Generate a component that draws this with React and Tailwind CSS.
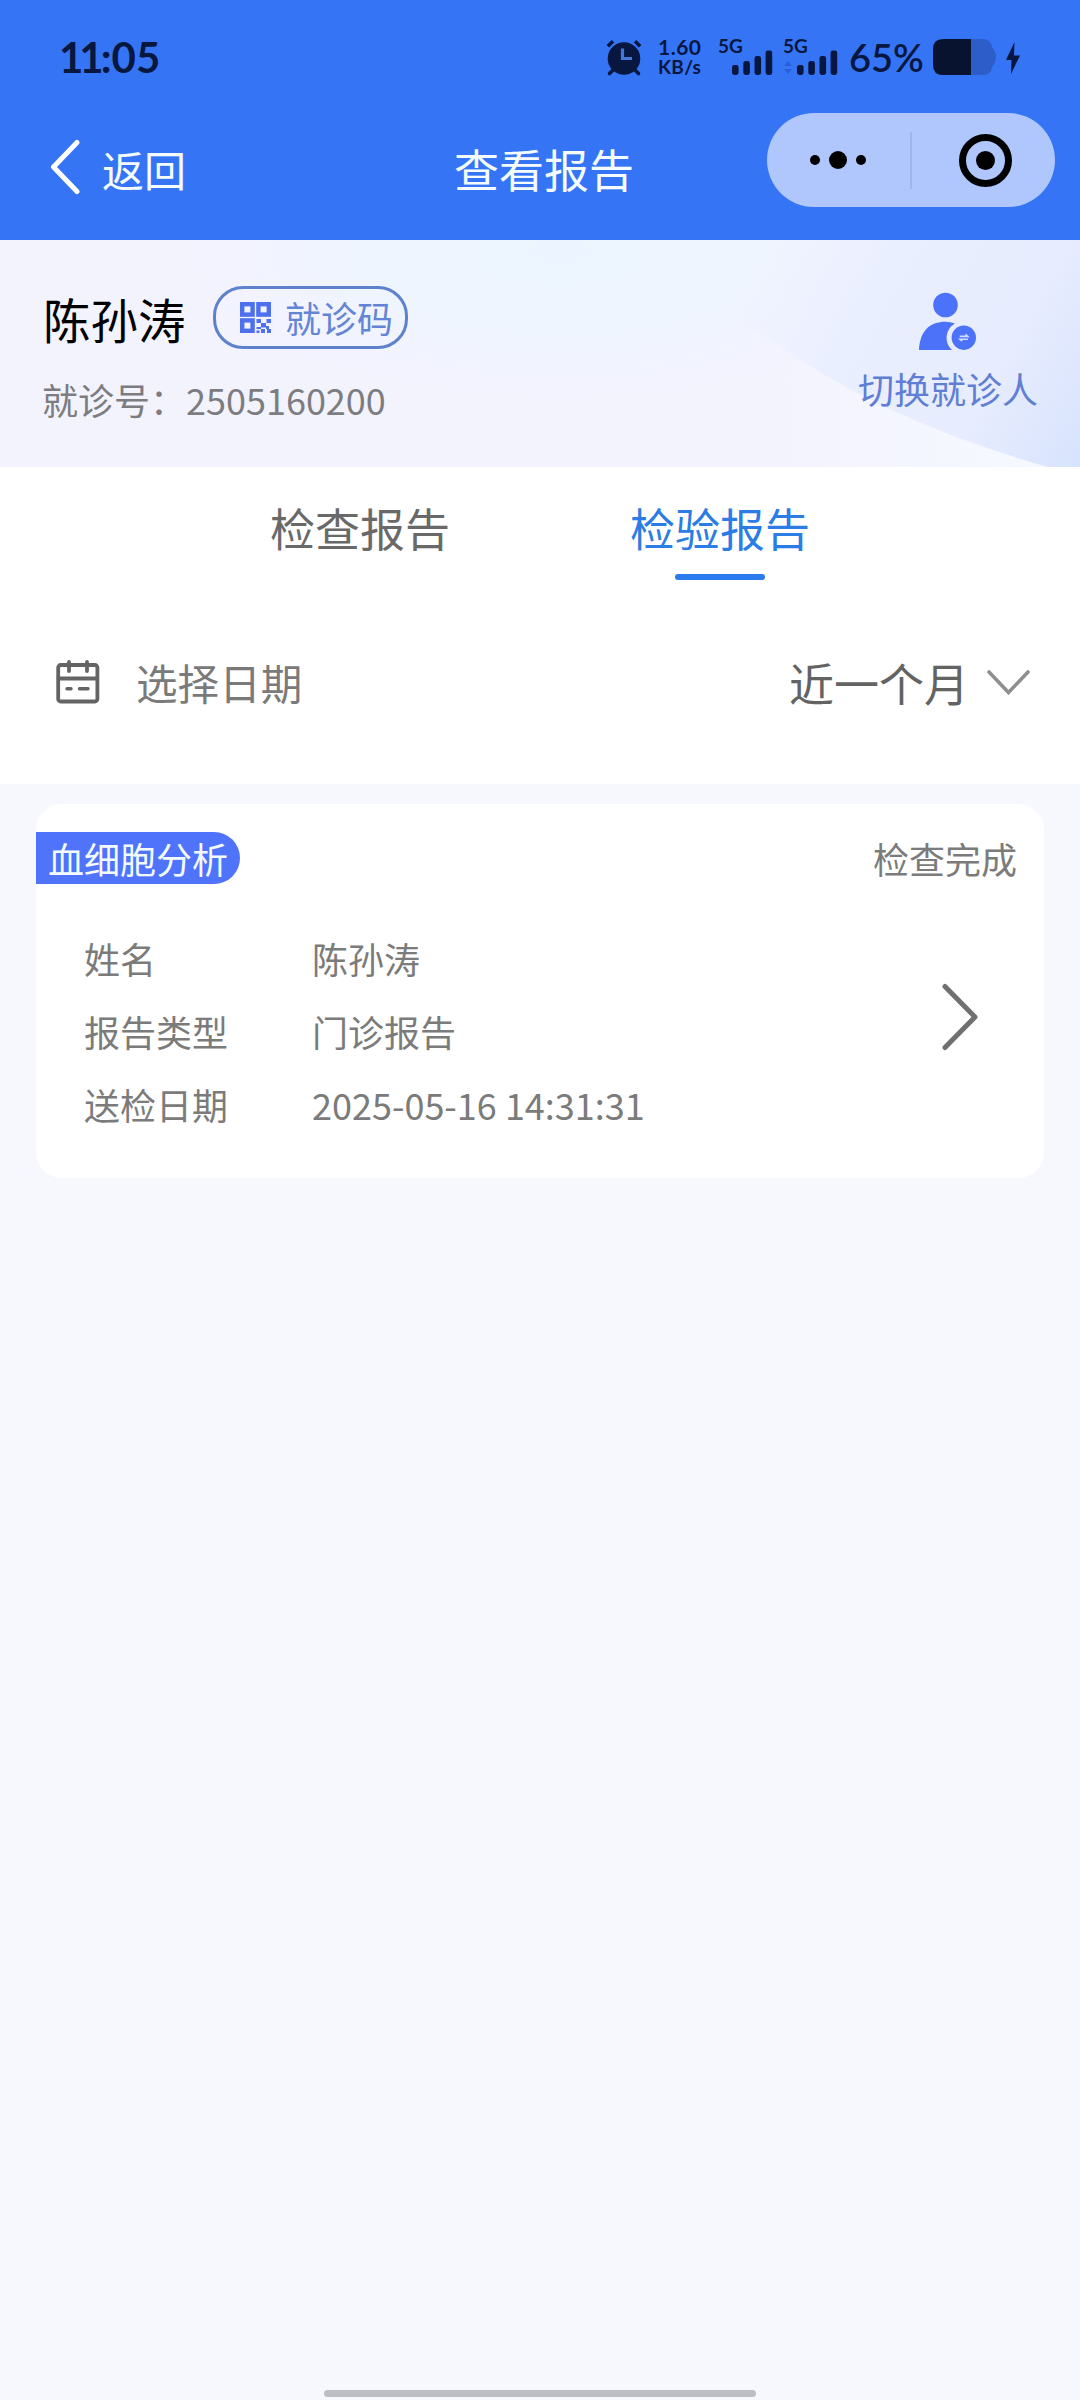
import React from "react";

const INK = "#07173f";

function AlarmIcon() {
  return (
    <svg width="36" height="38" viewBox="0 0 36 38" className="block shrink-0">
      <circle cx="18" cy="19.5" r="16.3" fill={INK} />
      <path d="M1.8 7.2 L7 2.2 M34.2 7.2 L29 2.2" stroke={INK} strokeWidth="3.6" />
      <path d="M7 31 L3.5 34.5 M29 31 L32.5 34.5" stroke={INK} strokeWidth="3.6" strokeLinecap="round" />
      <path d="M16.5 9.5 V19.5 H26" fill="none" stroke="#4377da" strokeWidth="3.2" />
    </svg>
  );
}

function Signal({ arrows }) {
  return (
    <div className="relative h-9 w-[55px] shrink-0">
      <span className="absolute left-0 top-[-3px] text-[19px] font-bold leading-5">5G</span>
      <svg width="55" height="36" viewBox="0 0 55 36" className="block">
        {arrows && <path d="M5 22 l4 5 h-8 z M5 35 l4 -5 h-8 z" fill="#285fd8" />}
        <rect x="14" y="26" width="6.6" height="10" rx="2.4" fill={INK} />
        <rect x="25.3" y="22" width="6.6" height="14" rx="2.4" fill={INK} />
        <rect x="36.5" y="17" width="6.6" height="19" rx="2.4" fill={INK} />
        <rect x="47.6" y="11.5" width="6.6" height="24.5" rx="2.4" fill={INK} />
      </svg>
    </div>
  );
}

function Battery() {
  return (
    <svg width="63" height="36" viewBox="0 0 63 36" className="block shrink-0">
      <path d="M38 0 H50 Q58 0 59 8 Q63 13 63 18 Q63 23 59 28 Q58 36 50 36 H38 Z" fill="#2c5dc9" />
      <path d="M38 0 H10 Q0 0 0 10 V26 Q0 36 10 36 H38 Z" fill="#08132f" />
    </svg>
  );
}

function StatusBar() {
  return (
    <div className="flex h-[113px] items-start pl-[59px] pt-[39px] font-['Lato'] text-[#07173f]">
      <span className="mt-[-8px] w-[547px] text-[42px] font-bold leading-[52px]">
        <span className="tracking-[-4px]">11</span>
        <span className="ml-[1px]">:05</span>
      </span>
      <AlarmIcon />
      <div className="ml-[16px] mt-[-2px] flex w-[60px] flex-col font-bold">
        <span className="text-[21px] leading-5 tracking-[0.5px]">1.60</span>
        <span className="text-[19px] leading-5 tracking-[0.3px]">KB/s</span>
      </div>
      <Signal />
      <div className="w-[10px]" />
      <Signal arrows />
      <span className="ml-[11px] mt-[-4px] w-[84px] text-[38px] font-semibold leading-[44px] tracking-[-0.1px]">65%</span>
      <Battery />
      <svg width="16" height="34" viewBox="0 0 16 34" className="ml-[9px] mt-[3px] block">
        <path d="M9.5 0 L1 18 H6.5 L6 32 L15 13.5 H9 Z" fill={INK} />
      </svg>
    </div>
  );
}

function NavBar() {
  return (
    <div className="flex h-[127px] items-start">
      <svg width="30" height="56" viewBox="0 0 30 56" className="ml-[50px] mt-[26px] block">
        <path d="M27 3.5 L3.5 28 L27 52.5" fill="none" stroke="#fff" strokeWidth="5" strokeLinecap="round" strokeLinejoin="round" />
      </svg>
      <span className="ml-[22px] mt-[26px] w-[352px] text-[42px] leading-[60px] text-[#f4fcff]">返回</span>
      <span className="mt-[26px] w-[313px] text-[45px] leading-[60px] text-[#f4fcff]">查看报告</span>
      <div className="flex h-[94px] w-[288px] items-center rounded-full bg-[#b0c7fd]">
        <div className="flex w-[143px] items-center justify-center gap-[9px] pr-[2px]">
          <i className="size-[10px] rounded-full bg-black" />
          <i className="size-[18px] rounded-full bg-black" />
          <i className="size-[10px] rounded-full bg-black" />
        </div>
        <div className="h-[57px] w-[2px] bg-[#9fb5ee]" />
        <div className="flex w-[143px] items-center justify-center">
          <div className="mr-[-4px] flex size-[53px] items-center justify-center rounded-full border-[7px] border-black">
            <i className="size-[19px] rounded-full bg-black" />
          </div>
        </div>
      </div>
    </div>
  );
}

function QrIcon() {
  return (
    <svg width="31" height="31" viewBox="0 0 31 31" className="block shrink-0">
      <g fill="none" stroke="#4f70ee" strokeWidth="4.4">
        <rect x="2.2" y="2.2" width="10.4" height="10.4" />
        <rect x="18.4" y="2.2" width="10.4" height="10.4" />
        <rect x="2.2" y="18.4" width="10.4" height="10.4" />
      </g>
      <path
        fill="#4f70ee"
        d="M16.5 17h4.5v4h-4.5z M26.5 17h4.5v4h-4.5z M21 21h5v4.5h-5z M16.5 25h4.5v2h-4.5z M26 24h3v3h-3z M21 27h4v4h-4z M27 27h4v4h-4z M16.5 28.5h3v2.5h-3z"
      />
    </svg>
  );
}

function SwitchPatientIcon() {
  return (
    <svg width="58" height="58" viewBox="0 0 58 58" className="block">
      <circle cx="26.5" cy="13" r="12.3" fill="#4c72f9" />
      <path d="M0 58 C1 39 10.5 29.7 26.5 29.7 Q31.5 29.7 36 31.5 A16.3 16.3 0 0 0 33 58 Z" fill="#4c72f9" />
      <circle cx="44.8" cy="45.7" r="12.2" fill="#4c72f9" />
      <path d="M40.7 44.4 H48.7 L46.5 42.3 M49 47.3 H41 L43.2 49.2" fill="none" stroke="#cfdcff" strokeWidth="1.6" />
    </svg>
  );
}

function PatientBanner() {
  return (
    <div className="relative h-[227px] bg-[#f3f3fe]">
      <svg width="1080" height="227" viewBox="0 0 1080 227" className="absolute inset-0 block">
        <defs>
          <radialGradient id="sky" cx="560" cy="10" r="1" gradientUnits="userSpaceOnUse" gradientTransform="translate(560 10) scale(420 170) translate(-560 -10)">
            <stop offset="0" stopColor="#ecf5ff" />
            <stop offset="0.5" stopColor="#eef5ff" stopOpacity="0.8" />
            <stop offset="1" stopColor="#f3f3fe" stopOpacity="0" />
          </radialGradient>
          <linearGradient id="wave" x1="740" y1="40" x2="1080" y2="227" gradientUnits="userSpaceOnUse">
            <stop offset="0" stopColor="#edf0ff" stopOpacity="0" />
            <stop offset="0.3" stopColor="#eaefff" />
            <stop offset="0.7" stopColor="#e7ecfe" />
            <stop offset="1" stopColor="#d7e3fd" />
          </linearGradient>
          <linearGradient id="glow" x1="760" y1="0" x2="1000" y2="0" gradientUnits="userSpaceOnUse">
            <stop offset="0" stopColor="#f5f7ff" stopOpacity="0" />
            <stop offset="1" stopColor="#f5f8ff" />
          </linearGradient>
        </defs>
        <ellipse cx="560" cy="10" rx="560" ry="217" fill="url(#sky)" />
        <path d="M700 227 L800 118 Q900 185 1048 227 Z" fill="url(#glow)" />
        <path d="M620 0 Q710 60 785 110 Q890 182 1048 227 H1080 V0 Z" fill="url(#wave)" />
      </svg>
      <div className="relative flex justify-between">
        <div className="pl-[43px] pt-[46px]">
          <div className="flex h-[63px] items-center">
            <span className="mt-[2px] w-[170px] text-[47.5px] leading-[63px] text-black">陈孙涛</span>
            <div className="flex h-[63px] w-[195px] items-center rounded-[30px] border-[3px] border-[#5d81cc] pl-6">
              <QrIcon />
              <span className="ml-[14px] mt-[-2px] text-[36px] leading-[50px] text-[#6484d6]">就诊码</span>
            </div>
          </div>
          <div className="ml-[-1px] mt-[25px] text-[36px] leading-[50px] text-[#7c7c81]">就诊号：2505160200</div>
        </div>
        <div className="mr-[42px] flex w-[180px] flex-col pt-[52px]">
          <div className="pl-[61px]">
            <SwitchPatientIcon />
          </div>
          <span className="mt-[13px] text-[36px] leading-[50px] text-[#607ed4]">切换就诊人</span>
        </div>
      </div>
    </div>
  );
}

function Tabs() {
  return (
    <div className="flex h-[113px] px-[180px] pt-[31px] text-[45px] leading-[60px]">
      <div className="flex flex-1 justify-center text-[#696969]">检查报告</div>
      <div className="flex flex-1 flex-col items-center text-[#2b7ce4]">
        检验报告
        <i className="mt-4 h-[6px] w-[90px] rounded-full bg-[#2b7bee]" />
      </div>
    </div>
  );
}

function DateFilter() {
  return (
    <div className="flex h-[204px] items-start pl-[56px] pt-[72px]">
      <svg width="44" height="52" viewBox="0 0 44 52" className="block">
        <g fill="none" stroke="#646464" strokeWidth="3.8" strokeLinecap="round">
          <rect x="2.2" y="13" width="39.2" height="36.5" rx="2.5" />
          <path d="M2.5 26.5 H41 M13 10 V19 M31 10 V19" />
          <path d="M11 36.7 H15 M23.5 36.7 H32" strokeWidth="3.4" />
        </g>
      </svg>
      <span className="ml-[36px] w-[653px] text-[41.6px] leading-[60px] text-[#7a7a7a]">选择日期</span>
      <span className="mt-[1px] w-[198px] text-[45px] leading-[60px] text-[#636363]">近一个月</span>
      <svg width="43" height="25" viewBox="0 0 43 25" className="mt-[18px] block">
        <path d="M2 2 L21.5 22.5 L41 2" fill="none" stroke="#8f8f8f" strokeWidth="3.6" strokeLinecap="round" />
      </svg>
    </div>
  );
}

const rows = [
  ["姓名", "陈孙涛"],
  ["报告类型", "门诊报告"],
  ["送检日期", "2025-05-16 14:31:31"],
];

function ReportCard() {
  return (
    <div className="mx-9 mt-5 h-[374px] rounded-[26px] bg-white pt-7 text-[36px] text-[#7b7b7b]">
      <div className="flex h-[52px] items-center justify-between pr-[27px]">
        <span className="h-[52px] w-[204px] rounded-r-full bg-[#4f74fb] pl-3 leading-[52px] text-[#f4fbff]">血细胞分析</span>
        <span className="leading-[51px]">检查完成</span>
      </div>
      <div className="flex items-center justify-between pl-12 pr-[65px] pt-[38px]">
        <div>
          {rows.map(([label, value]) => (
            <div key={label} className="flex h-[73px] leading-[73px]">
              <span className="w-[228px]">{label}</span>
              <span>{value}</span>
            </div>
          ))}
        </div>
        <svg width="38" height="68" viewBox="0 0 38 68" className="mt-[-30px] block">
          <path d="M4 3.5 L34 34 L4 64.5" fill="none" stroke="#707070" strokeWidth="5" strokeLinecap="round" strokeLinejoin="round" />
        </svg>
      </div>
    </div>
  );
}

export default function App() {
  return (
    <div className="flex h-[2400px] w-[1080px] flex-col overflow-hidden bg-[#f7f8fd] font-['Noto_Sans_CJK_SC','Noto_Sans',sans-serif]">
      <header className="h-60 bg-[#3575f5]">
        <StatusBar />
        <NavBar />
      </header>
      <PatientBanner />
      <section className="bg-white">
        <Tabs />
        <DateFilter />
      </section>
      <ReportCard />
      <div className="mx-auto mb-[3px] mt-auto h-[7px] w-[432px] rounded-full bg-[#bcbec3]" />
    </div>
  );
}
